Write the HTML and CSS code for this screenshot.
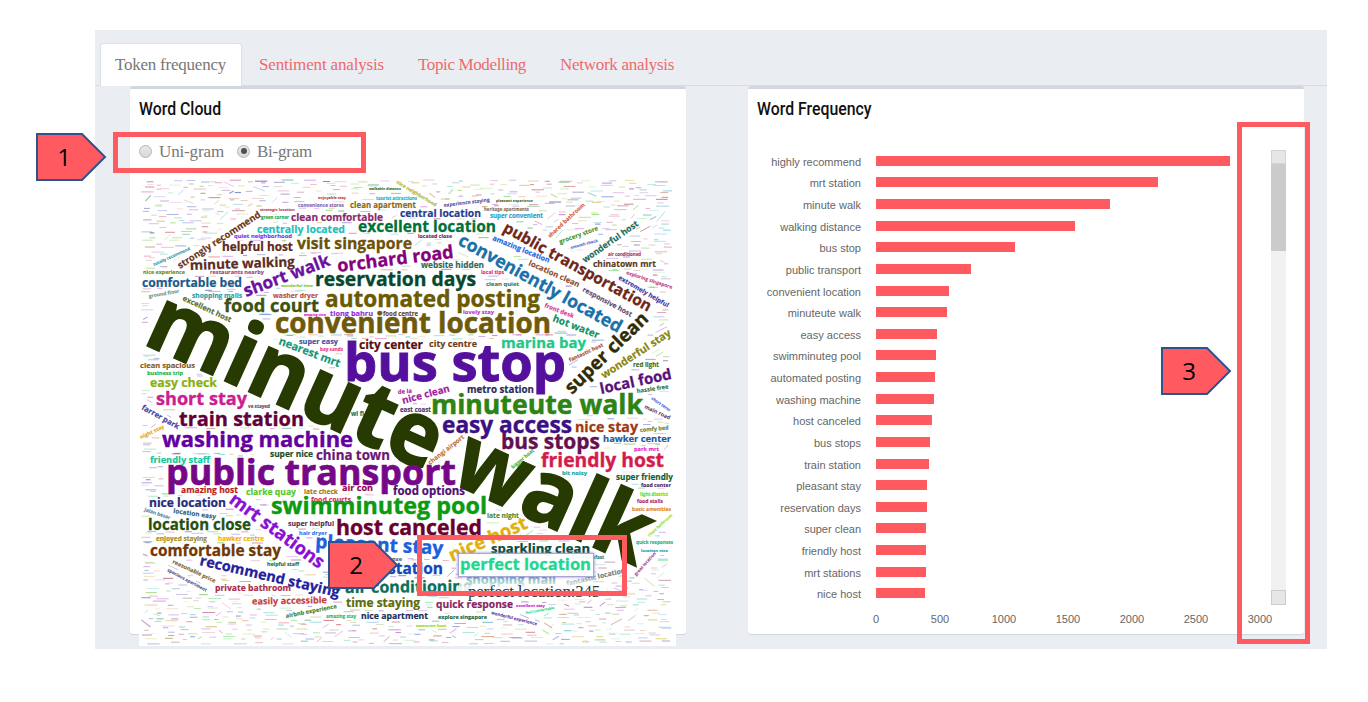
FILE: index.html
```html
<!DOCTYPE html>
<html lang="en">
<head>
<meta charset="utf-8">
<title>Token frequency</title>
<link rel="stylesheet" href="styles.css">
</head>
<body>
<main class="app">
  <nav class="tabs">
    <a class="tab tab-active"><span class="fit" data-w="111">Token frequency</span></a>
    <a class="tab"><span class="fit" data-w="125">Sentiment analysis</span></a>
    <a class="tab"><span class="fit" data-w="108">Topic Modelling</span></a>
    <a class="tab"><span class="fit" data-w="114">Network analysis</span></a>
  </nav>
  <div class="boxes">
    <section class="box">
      <h2 class="title">Word Cloud</h2>
      <div class="radios">
        <i class="radio"></i><span class="fit radio-label" data-w="65">Uni-gram</span>
        <i class="radio checked"></i><span class="fit radio-label" data-w="55">Bi-gram</span>
      </div>
      <svg class="cloud" id="cloud" viewBox="139 178 537 468" width="537" height="468"></svg>
    </section>
    <section class="box">
      <h2 class="title">Word Frequency</h2>
      <div class="chart">
        <div class="plot">
          <div class="rows" id="rows"></div>
          <div class="axis"><span>0</span><span>500</span><span>1000</span><span>1500</span><span>2000</span><span>2500</span><span>3000</span></div>
        </div>
        <div class="scroll"><i class="knob"></i><i class="thumb"></i><i class="track"></i><i class="knob end"></i></div>
      </div>
    </section>
  </div>
</main>
<div class="word-focus"></div>
<svg class="word-focus-text" width="140" height="26"><text x="3" y="17.5" textLength="131" lengthAdjust="spacingAndGlyphs">perfect location</text></svg>
<div class="tooltip"><span class="fit" data-w="132">perfect location:345</span></div>
<div class="frame frame-1"></div>
<div class="frame frame-2"></div>
<div class="frame frame-3"></div>
<div class="tag tag-1"><svg width="71" height="48"><path d="M1 1H46L69 24L46 47H1Z"/></svg><b>1</b></div>
<div class="tag tag-2"><svg width="71" height="48"><path d="M1 1H46L69 24L46 47H1Z"/></svg><b>2</b></div>
<div class="tag tag-3"><svg width="71" height="48"><path d="M1 1H46L69 24L46 47H1Z"/></svg><b>3</b></div>
<script src="main.js"></script>
</body>
</html>
```
FILE: styles.css
```css
* { box-sizing: border-box; }
body { margin: 0; width: 1368px; height: 702px; overflow: hidden; position: relative; background: #fff; font-family: "Liberation Serif", "Times New Roman", serif; color: #777; }
.app { margin: 30px 0 0 95px; width: 1232px; height: 619px; background: #eaeef3; padding-top: 13px; }
.tabs { display: flex; height: 43px; padding-left: 5px; border-bottom: 1px solid #d9dbde; }
.tab { height: 42px; padding: 0 15px; margin-right: 2px; border: 1px solid transparent; color: #ee6a6c; font-size: 17px; line-height: 41px; white-space: nowrap; }
.tab-active { height: 43px; width: 142px; padding: 0 14px; background: #fff; color: #777; border-color: #dcdfe3; border-bottom: 0; border-radius: 4px 4px 0 0; margin-right: 1px; }
.fit { display: inline-block; white-space: nowrap; }
.boxes { display: flex; gap: 62px; padding-left: 35px; }
.box { width: 556px; height: 548px; background: #fff; border-top: 3px solid #d2d6de; border-radius: 3px; box-shadow: 0 1px 1px rgba(0,0,0,.1); }
.title { margin: 0; padding: 10px 0 0 9px; height: 44px; font: 500 18px/20px Roboto, sans-serif; color: #111; transform: scaleX(.88); transform-origin: 9px 0; white-space: nowrap; }
.radios { display: flex; align-items: center; height: 36px; padding-left: 9px; font-size: 17px; }
.radio { width: 13px; height: 13px; border-radius: 50%; border: 1px solid #b5b5b5; background: linear-gradient(#e8e8e8, #d8d8d8); display: flex; align-items: center; justify-content: center; }
.radio.checked::after { content: ""; width: 6px; height: 6px; border-radius: 50%; background: #505050; }
.radio-label { margin-left: 7px; margin-right: 13px; padding-top: 2px; line-height: 20px; }
.cloud { display: block; margin: 9px 0 0 9px; background: #fff; position: relative; overflow: visible; }
.cloud text, .word-focus-text text { font-family: "Open Sans", "Noto Sans", sans-serif; font-weight: 700; }
.chart { display: flex; padding-top: 17px; font: 11px/14px "Liberation Sans", Arial, sans-serif; color: #666; }
.plot { width: 523px; }
.rows { display: grid; grid-auto-rows: 21.63px; }
.row { display: flex; align-items: center; }
.row-label { width: 113px; margin-right: 15px; text-align: right; padding-top: 2px; }
.bar { height: 10px; background: #ff5a5f; }
.axis { display: flex; padding: 8px 0 0 96px; }
.axis span { flex: 0 0 64px; text-align: center; }
.scroll { width: 15px; height: 455px; display: flex; flex-direction: column; background: #f1f1f1; }
.knob { height: 14px; border: 1px solid #d3d3d3; background: #e6e6e6; }
.thumb { height: 87px; background: #cbcbcb; }
.track { flex: 1; }
.end { height: 15px; border-color: #ccc; }
.word-focus { position: absolute; left: 458px; top: 553px; width: 136px; height: 24px; background: rgba(255,255,255,.94); border: 1px solid #a9a5dc; box-shadow: 0 0 3px #8a86c8; }
.word-focus-text { position: absolute; left: 457px; top: 552px; }
.word-focus-text text { font-size: 16.6px; fill: #1cd890; stroke: #1cd890; stroke-width: .3px; }
.tooltip { position: absolute; left: 459px; top: 578px; width: 148px; height: 21px; padding-left: 9px; background: linear-gradient(rgba(255,255,255,.25), rgba(255,255,255,.9) 45%); font-size: 17px; line-height: 27px; color: #333; }
.frame { position: absolute; border: 5px solid #ff5a5f; }
.frame-1 { left: 113px; top: 132px; width: 253px; height: 41px; }
.frame-2 { left: 417px; top: 535px; width: 210px; height: 61px; }
.frame-3 { left: 1237px; top: 122px; width: 73px; height: 522px; }
.tag { position: absolute; width: 71px; height: 48px; }
.tag svg { display: block; }
.tag path { fill: #ff5a5f; stroke: #2f528f; stroke-width: 2; }
.tag b { position: absolute; left: 0; top: 0; width: 56px; text-align: center; font: 400 24px/48px "Open Sans", sans-serif; color: #000; }
.tag-1 { left: 36px; top: 133px; }
.tag-2 { left: 328px; top: 541px; }
.tag-3 { left: 1161px; top: 347px; }
```
FILE: main.js
```js
// Bars: label and width in pixels.
const bars = [["highly recommend",354],["mrt station",282],["minute walk",233.5],["walking distance",198.5],["bus stop",138.5],["public transport",94.5],["convenient location",72.5],["minuteute walk",70.5],["easy access",61],["swimminuteg pool",60],["automated posting",59],["washing machine",58],["host canceled",56],["bus stops",54],["train station",53],["pleasant stay",51],["reservation days",51],["super clean",50],["friendly host",50],["mrt stations",50],["nice host",49]];
document.getElementById("rows").innerHTML = bars.map(b =>
  `<div class="row"><span class="row-label">${b[0]}</span><i class="bar" style="width:${b[1]}px"></i></div>`).join("");

// Words: text, start x, baseline y, width, colour, angle.
const words = [
["minute walk",141,343,543,"#263a02",24.3],
["strongly recommend",180,269,97,"#6b3520",-33],["helpful host",222,251,71,"#5c2a1a",0],["minute walking",190,270,105,"#5c2c22",-2],
["clean comfortable",291,221,92,"#8a2a6c",0],["centrally located",257,232.5,88,"#22bfc0",0],["excellent location",358,232,138,"#00703a",0],
["visit singapore",297,248.5,115,"#6b5208",0],["clean apartment",350,207.5,66,"#8a6a10",0],["convenience stores",298,207,46,"#8060b0",0],
["strategic location",260,211,35,"#b04060",0],["green corner",261,219,28,"#10a040",0],["quiet neighborhood",234,238,58,"#7a30f0",0],
["short walk",246,297,91,"#6a10a0",-20.5],["orchard road",338,272,117,"#86007e",-7],["reservation days",315,286,161,"#06482e",0],
["comfortable bed",142,287,100,"#1c5a8a",0],["nice experience",143,274,42,"#6a8a10",0],["restaurants nearby",210,274,54,"#a04080",0],
["totally recommend",154,266,40,"#2a90a0",-24],["ground floor",149,298,31,"#709080",-10],["shopping malls",192,298,50,"#20a0b0",0],
["washer dryer",273,298,45,"#c04a3a",0],["wonderful time",281,287,32,"#80c010",0],["food court",224,312,95,"#3c5210",0],
["excellent host",182,300,53,"#55702a",25],["automated posting",325,307,215,"#6a5a00",0],["tiong bahru",330,315.5,43,"#8a30d8",0],
["convenient location",275,333,276,"#6f5a0c",0],["food centre",383,315.5,35,"#6a4030",0],["amazing view",304,316,22,"#d010c0",0],
["walkable distance",369,190,32,"#2a6a20",0],["tourist attractions",376,200,41,"#10b0c0",0],["enjoyable stay",318,199,28,"#b04040",0],
["experience staying",444,207,46,"#5050a0",-7],["central location",400,216.5,81,"#263c92",0],["heritage apartments",484,211,45,"#8a6a4a",0],
["pleasant experience",496,202,37,"#506030",0],["super convenient",490,218,53,"#20a0c8",0],["located close",418,238,34,"#702050",0],
["website hidden",421,268,63,"#2c6a58",0],["local tips",481,274,23,"#e02080",0],["clean quiet",486,286,33,"#3c7a40",0],["lovely stay",463,314,31,"#c030c0",0],
["shared bathroom",550,238,48,"#d06040",-43],["grocery store",560,244,41,"#40902a",-20],["smooth check",571,249,28,"#5060c8",-15],
["wonderful host",585,263,66,"#20685a",-35],["air conditioned",608,255.5,33,"#a03060",0],["chinatown mrt",593,267,63,"#5a3a1a",0],
["exploring singapore",626,274,48,"#c04080",18],["extremely helpful",618,279,57,"#3c30a0",30],["public transportation",502,231,167,"#6f2614",29],
["conveniently located",457,244,184,"#1a70a8",29],["amazing location",492,240,61,"#2060e0",22],["location clean",528,265,55,"#8a4a28",24],
["responsive host",582,291,55,"#604a70",28],["front desk",544,307,31,"#d83090",21],["hot water",552,321,49,"#109060",21],
["super clean",572,395,108,"#2e2c06",-44],["wonderful stay",604,379,81,"#8a8410",-33],["fantastic host",570,362,37,"#a04830",-25],
["red light",633,367,26,"#406a10",0],["local food",601,394,73,"#58107a",-12],["hassle free",637,393,32,"#307040",-8],["short term",651,399,22,"#3060e0",35],
["main road",644,408,28,"#604a70",25],["marina bay",501,348,85,"#20c888",0],["bus stop",344,381,222,"#54109c",0],["city center",359,349,64,"#5a1010",0],
["city centre",429,347,48,"#6a4020",0],["metro station",467,392.5,67,"#2c2c5a",0],["nice clean",403,404,49,"#a020a0",-15],["de la",398,394,14,"#a020a0",-5],
["minuteute walk",431,414,212,"#2c8414",0],["easy access",442,433,130,"#3a1084",0],["nice stay",575,432,63,"#a03810",0],["comfy bed",640,432,29,"#608040",-5],
["bus stops",501,449,99,"#641050",0],["hawker center",603,442,68,"#2058a0",0],["park mrt",634,451,25,"#e020c0",0],["friendly host",541,467,123,"#d41c4c",0],
["bit noisy",562,475,25,"#10a0a0",0],["super friendly",616,479.5,57,"#106030",0],["food center",641,487,30,"#402060",0],["changi airport",430,465,44,"#c06a30",-38],
["bigger boat",513,469,28,"#40b010",-40],["east coast",400,412,31,"#503060",0],["nearest mrt",278,344,65,"#109878",21],["super easy",299,344,39,"#4050a0",0],
["bay sands",320,351,23,"#f03080",0],["clean spacious",140,368,55,"#8a5a18",0],["business trip",147,375,36,"#10b040",0],["easy check",150,387,67,"#8ab010",0],
["short stay",156,405,91,"#cc2090",0],["farrer park",141,409,42,"#4040a8",29],["train station",179,426,125,"#600038",0],["washing machine",162,447,191,"#6400a0",0],
["night stay",141,439,26,"#e0a010",-25],["super nice",270,457,43,"#204a2a",0],["china town",316,460,74,"#6a1878",0],["friendly staff",150,462.5,60,"#10c898",0],
["public transport",166,485,290,"#760888",0],["ve stayed",248,408,22,"#604060",0],["wi fi",351,416,13,"#207050",0],
["amazing host",181,492.5,57,"#b81818",0],["clarke quay",246,494.5,50,"#50c820",0],["late check",304,494,34,"#a07a20",0],["air con",342,491,31,"#900050",0],
["food options",393,495,72,"#501070",0],["food courts",311,501.5,40,"#d03060",0],["nice location",149,507,77,"#262c7a",0],["location easy",173,513,43,"#306080",8],
["jalan besar",144,511,27,"#5080a0",18],["swimminuteg pool",271,514,216,"#0c9a10",0],["late night",487,517.5,32,"#4a8a2a",0],["location close",148,530,103,"#265010",0],
["super helpful",288,525.5,46,"#503060",0],["hair dryer",299,535,28,"#3070f0",0],["host canceled",336,535,146,"#6a0030",0],["mrt stations",228,502,113,"#8a10d8",36.5],
["enjoyed staying",156,541,51,"#a08a20",0],["hawker centre",218,541,46,"#f0b000",0],["comfortable stay",150,556,131,"#6f3806",0],
["reasonable price",172,563,47,"#7a6030",25],["spacious apartment",167,571,44,"#40508a",28],["recommend staying",199,565,143,"#22209a",13],
["private bathroom",215,590.5,76,"#a82848",0],["helpful staff",267,566,32,"#206a30",0],["easily accessible",252,604.5,75,"#c43c3c",-1],
["airbnb experience",286,618,52,"#3c7a1a",-11],["time staying",346,606.5,74,"#5e6c10",0],["nice apartment",361,619,67,"#202c58",0],["amazing stay",326,618,30,"#10b870",0],
["pleasant stay",315,548,128,"#1c60dc",3],["station",388,573.5,55,"#1048b8",0],["non expense",366,561,36,"#506070",0],["air conditioning",345,593,127,"#0a7058",-.5],
["nice host",452,562,84,"#e0b010",-24],["sparkling clean",491,553,99,"#064a38",0],["free breakfast",572,559,32,"#107a80",0],
["fantastic location",567,586,60,"#708080",-13],["shopping mall",466,584,90,"#4a9aa0",0],["quick response",436,608,77,"#8a2464",0],
["explore singapore",438,618.5,49,"#10603a",0],["excellent stay",516,607,29,"#d010d0",0],["wonderful experience",491,614,47,"#6030a0",14],
["feel comfortable",526,614,29,"#20d060",-10],["awesome host",416,627,30,"#80e010",0],["basic amenities",632,511,39,"#e08020",0],["food stalls",637,502.5,26,"#b02060",0],
["light district",640,496,28,"#50e010",0],["quick responses",636,543.5,37,"#20b070",0],["location nice",641,551.5,27,"#2090a0",0],
["nice neighborhood",396,183,46,"#b0b030",31],["clean bathroom",649,537,32,"#90e030",-42],["great location",636,576,30,"#a040a0",-48]
];

const svg = document.getElementById("cloud");
const measure = document.createElement("canvas").getContext("2d");
measure.font = '700 100px "Open Sans"';
const rad = Math.PI / 180;
let markup = "";
const zones = words.map(([t, x, y, w, c, a]) => {
  const size = w / measure.measureText(t).width * 100 * (w > 500 ? 1.04 : 1);
  markup += `<text transform="translate(${x} ${y}) rotate(${a})" font-size="${size.toFixed(2)}" textLength="${w}" lengthAdjust="spacingAndGlyphs" fill="${c}" stroke="${c}" stroke-width="${(size * .018).toFixed(2)}">${t}</text>`;
  return { t, x, y, w, size, cos: Math.cos(a * rad), sin: Math.sin(a * rad) };
});

let seed = 41;
const rnd = () => (seed = (seed * 16807) % 2147483647) / 2147483647;
const taken = new Set();
const inWord = (px, py) => zones.some(z => {
  const dx = px - z.x, dy = py - z.y;
  const u = dx * z.cos + dy * z.sin, v = -dx * z.sin + dy * z.cos;
  const top = z.t === "minute walk" && u > 115 && u < 310 ? .58 : .77;
  return u > -1 && u < z.w + 1 && v > -z.size * top - 1 && v < z.size * (/[gpyq]/.test(z.t) ? .2 : .02) + 1;
});
let dashes = "", count = 0;
for (let i = 0; i < 26000 && count < 1500; i++) {
  const len = 4 + rnd() * 9, r = rnd();
  const a = (r < .84 ? 0 : r < .94 ? -25 - rnd() * 25 : 20 + rnd() * 20) * rad;
  const x = 141 + rnd() * 524, y = 180 + rnd() * 464;
  const cells = [];
  let ok = true;
  for (let s = -2; s <= len + 2 && ok; s += 1.5) {
    const px = x + s * Math.cos(a), py = y + s * Math.sin(a);
    const key = Math.round(px / 3) + "," + Math.round(py / 3.4);
    if (px > 673 || py < 179 || py > 644 || taken.has(key) || inWord(px, py)) ok = false;
    cells.push(key);
  }
  if (!ok) continue;
  cells.forEach(k => taken.add(k));
  count++;
  const hue = Math.floor(rnd() * 360), light = 35 + Math.floor(rnd() * 28);
  dashes += `<line x1="${x.toFixed(1)}" y1="${y.toFixed(1)}" x2="${(x + len * Math.cos(a)).toFixed(1)}" y2="${(y + len * Math.sin(a)).toFixed(1)}" stroke="hsl(${hue} 60% ${light}%)" stroke-width="${(.6 + rnd() * .6).toFixed(2)}" opacity="${(.3 + rnd() * .3).toFixed(2)}"/>`;
}
svg.innerHTML = dashes + markup;

// Spread each serif label over its set width.
document.querySelectorAll(".fit").forEach(el => {
  const extra = (el.dataset.w - el.getBoundingClientRect().width) / el.textContent.length;
  el.style.letterSpacing = extra.toFixed(3) + "px";
});
```
